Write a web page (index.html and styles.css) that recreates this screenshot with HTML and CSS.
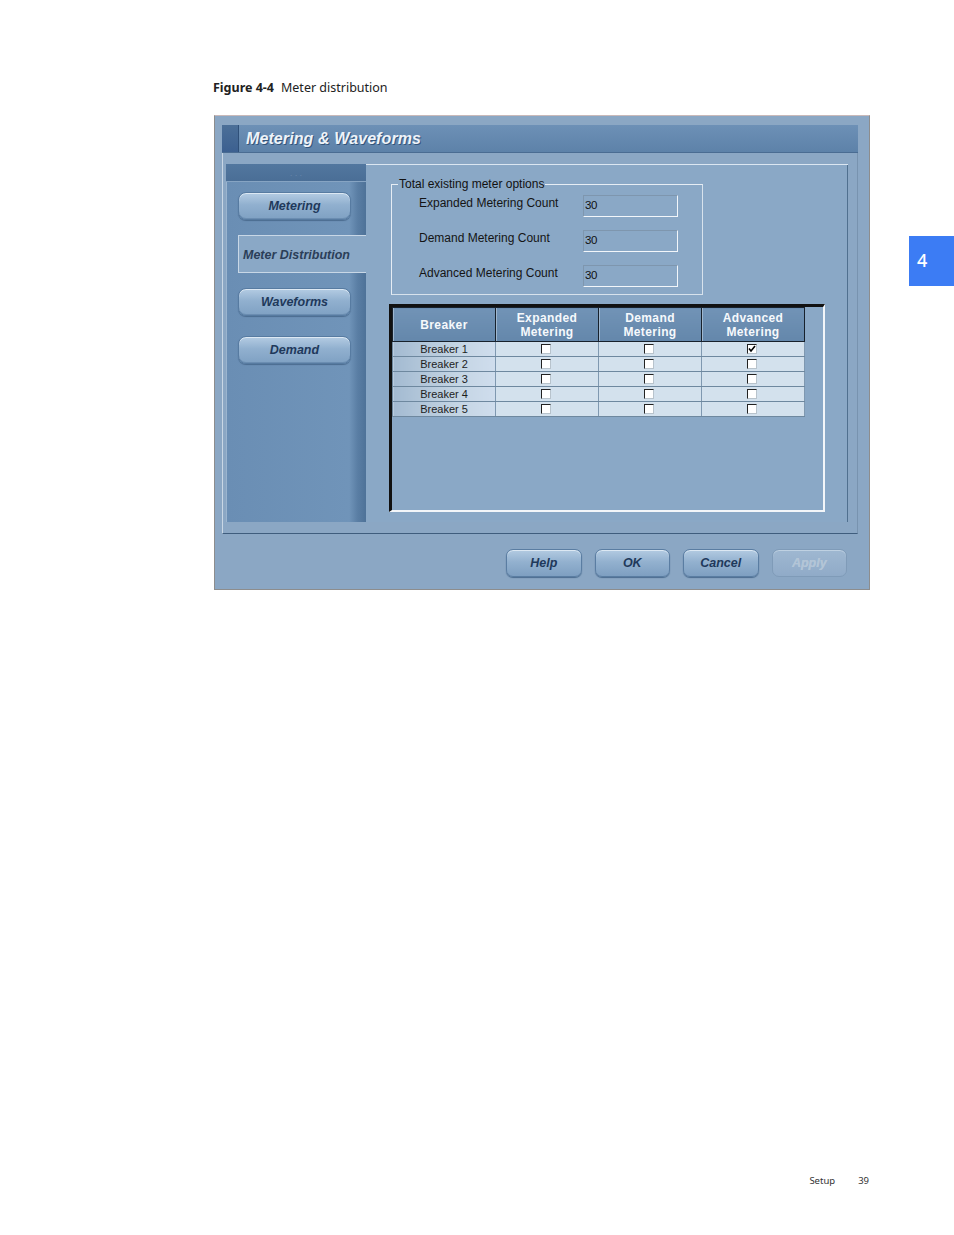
FILE: index.html
```html
<!DOCTYPE html>
<html lang="en">
<head>
<meta charset="utf-8">
<title>Meter distribution</title>
<link rel="stylesheet" href="styles.css">
</head>
<body>
<div class="page">
  <p class="caption"><b>Figure 4-4</b><span class="cap-text">Meter distribution</span></p>

  <div class="dialog">
    <div class="titlebar">
      <span class="accent"></span>
      <span class="title">Metering &amp; Waveforms</span>
    </div>

    <div class="frame">
      <div class="panel">
        <nav class="sidebar">
          <div class="strip"><span class="dots">· · ·</span></div>
          <div class="sbtn first">Metering</div>
          <div class="selected">Meter Distribution</div>
          <div class="sbtn second">Waveforms</div>
          <div class="sbtn third">Demand</div>
        </nav>

        <section class="content">
          <fieldset class="group">
            <legend>Total existing meter options</legend>
            <div class="row"><span class="lbl">Expanded Metering Count</span><span class="field">30</span></div>
            <div class="row"><span class="lbl">Demand Metering Count</span><span class="field">30</span></div>
            <div class="row"><span class="lbl">Advanced Metering Count</span><span class="field">30</span></div>
          </fieldset>

          <div class="tablebox">
            <table class="grid">
              <thead>
                <tr>
                  <th>Breaker</th>
                  <th>Expanded<br>Metering</th>
                  <th>Demand<br>Metering</th>
                  <th>Advanced<br>Metering</th>
                </tr>
              </thead>
              <tbody>
                <tr><td class="name">Breaker 1</td><td><span class="cb"></span></td><td><span class="cb"></span></td><td><span class="cb checked"><svg viewBox="0 0 8 8" width="8" height="8"><path d="M1 3.5 L3 6 L7 1" fill="none" stroke="#000" stroke-width="1.6"/></svg></span></td></tr>
                <tr><td class="name">Breaker 2</td><td><span class="cb"></span></td><td><span class="cb"></span></td><td><span class="cb"></span></td></tr>
                <tr><td class="name">Breaker 3</td><td><span class="cb"></span></td><td><span class="cb"></span></td><td><span class="cb"></span></td></tr>
                <tr><td class="name">Breaker 4</td><td><span class="cb"></span></td><td><span class="cb"></span></td><td><span class="cb"></span></td></tr>
                <tr><td class="name">Breaker 5</td><td><span class="cb"></span></td><td><span class="cb"></span></td><td><span class="cb"></span></td></tr>
              </tbody>
            </table>
          </div>
        </section>
      </div>
    </div>

    <div class="buttons">
      <div class="btn">Help</div>
      <div class="btn">OK</div>
      <div class="btn">Cancel</div>
      <div class="btn disabled">Apply</div>
    </div>
  </div>

  <footer class="pagefoot"><span>Setup</span><span>39</span></footer>

  <div class="chaptertab">4</div>
</div>
</body>
</html>
```

FILE: styles.css
```css
html, body {
  margin: 0;
  padding: 0;
  background: #ffffff;
}

.page {
  position: relative;
  width: 954px;
  min-height: 1235px;
  box-sizing: border-box;
  padding: 80px 0 48px 213px;
  display: flex;
  flex-direction: column;
  align-items: flex-start;
}

.caption {
  margin: 0 0 19px 0;
  font-family: "Noto Sans", "Open Sans", sans-serif;
  font-size: 12.5px;
  line-height: 16px;
  color: #222;
}
.caption b {
  font-weight: 700;
}
.cap-text {
  margin-left: 7px;
}

/* ---------- dialog ---------- */
.dialog {
  margin-left: 1px;
  width: 656px;
  box-sizing: border-box;
  border: 1px solid #8d8d8d;
  border-top-color: #c9b9b9;
  background: #8ba7c4;
  padding: 9px 11px 0 7px;
  font-family: "Liberation Sans", Arial, sans-serif;
}

.titlebar {
  height: 28px;
  display: flex;
  align-items: stretch;
  background: linear-gradient(#6d90b6, #5d82a9);
  border-bottom: 1px solid #4a6c92;
  box-sizing: border-box;
}
.accent {
  width: 16px;
  background: linear-gradient(#4b6f98, #3c6090);
  border-right: 1px solid #2f5079;
}
.title {
  margin-left: 7px;
  align-self: center;
  font-weight: 700;
  font-style: italic;
  font-size: 16px;
  color: #eef3f9;
  letter-spacing: 0.1px;
  text-shadow: 1px 1px 0 #34557b;
}

.frame {
  border-left: 1px solid #c9d7e5;
  border-right: 1px solid #7893af;
  border-bottom: 1px solid #3f5d7d;
  padding: 11px 9px 11px 3px;
}

.panel {
  display: flex;
  height: 358px;
  background: #8aa8c6;
  box-shadow: inset 0 1px 0 #dbe6f1, inset -1px 0 0 #50708f;
}

/* ---------- sidebar ---------- */
.sidebar {
  width: 140px;
  flex: none;
  background: linear-gradient(to right, #6a8eb4 0%, #7094b9 88%, #5a7ea4 94%, #4e7298 100%);
  box-shadow: inset 1px 0 0 #9bb5cf;
}
.strip {
  height: 17px;
  background: linear-gradient(#52779f, #4a6e96);
  border-bottom: 1px solid #86a4c3;
  text-align: center;
}
.dots {
  font-size: 8px;
  color: #6f90b4;
  line-height: 14px;
}

.sbtn {
  margin-left: 12px;
  width: 113px;
  height: 28px;
  box-sizing: border-box;
  border-radius: 8px;
  border: 1px solid #577ba1;
  background: linear-gradient(#b4cce3 0%, #91b0cf 45%, #7fa1c3 100%);
  box-shadow: inset 0 1px 0 #dce8f3, inset 0 -1px 0 #6b8db1, 0 1px 1px #4b6c90;
  display: flex;
  align-items: center;
  justify-content: center;
  font-weight: 700;
  font-style: italic;
  font-size: 12.5px;
  color: #1f395b;
}
.sbtn.first { margin-top: 10px; }
.sbtn.second { margin-top: 15px; }
.sbtn.third { margin-top: 20px; }

.selected {
  margin-top: 15px;
  margin-left: 12px;
  width: 128px;
  height: 38px;
  box-sizing: border-box;
  background: #8aa8c6;
  border-top: 1px solid #c8d7e6;
  border-left: 1px solid #c8d7e6;
  border-bottom: 1px solid #c8d7e6;
  padding-left: 4px;
  padding-top: 2px;
  display: flex;
  align-items: center;
  font-weight: 700;
  font-style: italic;
  font-size: 12.5px;
  color: #2b3e58;
}

/* ---------- content ---------- */
.content {
  flex: 1;
  padding: 13px 0 0 25px;
}

.group {
  margin: 0;
  width: 312px;
  box-sizing: border-box;
  border: 1px solid #e6edf4;
  border-right-color: #d7e2ec;
  border-bottom-color: #d7e2ec;
  padding: 4px 0 7px 27px;
}
.group legend {
  margin-left: -21px;
  padding: 0 1px;
  font-size: 12px;
  line-height: 14px;
  color: #111;
}
.row {
  display: flex;
  align-items: flex-start;
  height: 22px;
}
.row + .row {
  margin-top: 13px;
}
.lbl {
  width: 164px;
  font-size: 12px;
  line-height: 17px;
  color: #141414;
}
.field {
  width: 95px;
  height: 22px;
  box-sizing: border-box;
  border: 1px solid #f2f6fa;
  border-top-color: #7e96ae;
  border-left-color: #7e96ae;
  padding: 2px 0 0 1px;
  font-size: 11.5px;
  line-height: 14px;
  color: #111;
  letter-spacing: -0.5px;
}

.tablebox {
  margin: 9px 0 0 -2px;
  width: 436px;
  height: 208px;
  box-sizing: border-box;
  border-top: 3px solid #111;
  border-left: 3px solid #111;
  border-right: 2px solid #f3f6f9;
  border-bottom: 2px solid #f3f6f9;
}

.grid {
  border-collapse: collapse;
  width: 413px;
  table-layout: fixed;
}
.grid th {
  height: 33px;
  padding: 0;
  border: 1px solid #17212c;
  background: linear-gradient(#7193b6, #6487ab);
  color: #f6f9fc;
  font-weight: 700;
  font-size: 12px;
  line-height: 14px;
  letter-spacing: 0.4px;
  text-align: center;
  box-shadow: inset 1px 0 0 #9fb7cf;
}
.grid td {
  height: 14px;
  padding: 0;
  border-bottom: 1px solid #6e889f;
  border-right: 1px solid #7f98b0;
  background: #d3e1ed;
  text-align: center;
  font-size: 11px;
  line-height: 14px;
  color: #1d1d1d;
}
.grid td.name {
  background: linear-gradient(to right, #a3bad1, #c3d4e3 60%, #cfdded);
  border-left: 1px solid #6e889f;
}

.cb {
  display: inline-block;
  vertical-align: middle;
  width: 10px;
  height: 10px;
  box-sizing: border-box;
  background: #ffffff;
  border-top: 1px solid #222;
  border-left: 1px solid #222;
  border-right: 1px solid #b8c3cc;
  border-bottom: 1px solid #b8c3cc;
  position: relative;
  top: -1px;
  left: -1px;
}
.cb svg {
  display: block;
}

/* ---------- footer buttons ---------- */
.buttons {
  display: flex;
  justify-content: flex-end;
  gap: 13px;
  padding: 15px 11px 12px 0;
}
.btn {
  width: 75.5px;
  height: 28px;
  box-sizing: border-box;
  border-radius: 7px;
  border: 1px solid #5a7da2;
  background: linear-gradient(#b3cbe2 0%, #93b1cf 45%, #7e9fc1 100%);
  box-shadow: inset 0 1px 0 #dce8f3, 0 1px 1px #4b6c90;
  display: flex;
  align-items: center;
  justify-content: center;
  font-weight: 700;
  font-style: italic;
  font-size: 12.5px;
  color: #1f395b;
}
.btn.disabled {
  background: linear-gradient(#9fb8d1, #90abc8);
  border-color: #7f9bb8;
  box-shadow: inset 0 1px 0 #bfd1e2;
  color: #b3c5d7;
  text-shadow: 0 0 0 #b3c5d7;
}

/* ---------- page furniture ---------- */
.pagefoot {
  margin-top: auto;
  align-self: stretch;
  display: flex;
  justify-content: flex-end;
  gap: 23px;
  padding-right: 85px;
  font-family: "Noto Sans", "Open Sans", sans-serif;
  font-size: 9.5px;
  line-height: 12px;
  color: #333;
}

.chaptertab {
  position: absolute;
  top: 236px;
  right: 0;
  width: 45px;
  height: 50px;
  box-sizing: border-box;
  padding-left: 8px;
  background: #3c7cf4;
  color: #ffffff;
  font-family: "Noto Sans", "Open Sans", sans-serif;
  font-size: 18px;
  line-height: 48px;
  font-weight: 500;
}
```
